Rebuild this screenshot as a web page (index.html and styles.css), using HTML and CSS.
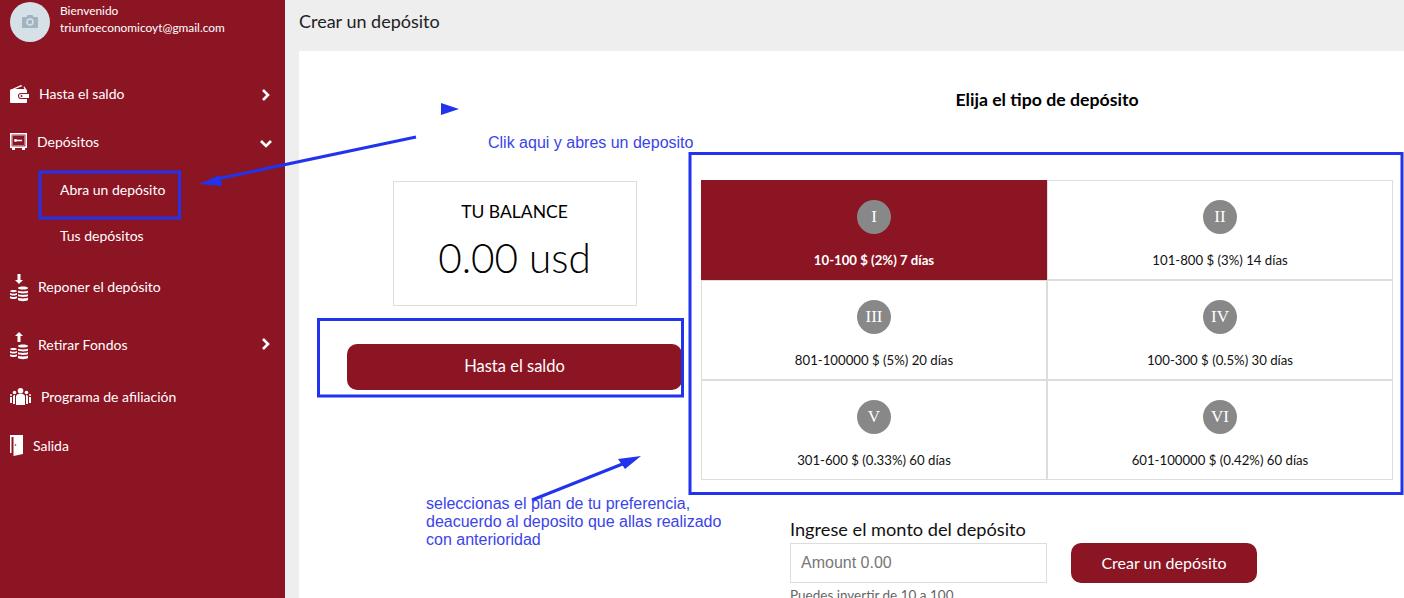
FILE: index.html
```html
<!DOCTYPE html>
<html lang="es">
<head>
<meta charset="utf-8">
<title>Crear un depósito</title>
<link rel="stylesheet" href="styles.css">
</head>
<body>
<div class="app">
  <aside class="sidebar">
    <div class="profile">
      <div class="avatar">
        <svg width="16" height="13" viewBox="0 0 16 13"><path fill="#a3b4c1" d="M1 2h3.500l1-2h5l1 2H15a1 1 0 0 1 1 1v9a1 1 0 0 1-1 1H1a1 1 0 0 1-1-1V3a1 1 0 0 1 1-1z"/><circle cx="8" cy="7" r="3.800" fill="#d6e0e7"/><circle cx="8" cy="7" r="2.200" fill="#a3b4c1"/></svg>
      </div>
      <div class="profile-text">
        <div>Bienvenido</div>
        <div class="email">triunfoeconomicoyt@gmail.com</div>
      </div>
    </div>
    <nav class="menu">
      <a class="item item-balance">
        <svg class="icon icon-wallet" width="19" height="18" viewBox="0 0 19 18"><path fill="#fff" d="M0 5 11 0l1.500 1L5 4h9.500l-1-2 1-.5L16 4v1z"/><path fill="#fff" d="M1 4.500h15a1 1 0 0 1 1 1V8h-6a3 3 0 0 0 0 6h6v3a1 1 0 0 1-1 1H1a1 1 0 0 1-1-1V5.500a1 1 0 0 1 1-1z"/><path fill="#fff" d="M11 9h8v4h-8a2 2 0 0 1 0-4z"/><circle cx="11.500" cy="11" r="1" fill="#8c1524"/></svg>
        <span class="label-balance">Hasta el saldo</span>
        <svg class="chev chev-balance" width="10" height="14" viewBox="0 0 10 14"><path d="M2 2l5 5-5 5" fill="none" stroke="#fff" stroke-width="2.600"/></svg>
      </a>
      <a class="item item-deposits">
        <svg class="icon" width="17" height="17" viewBox="0 0 17 17"><rect x=".8" y=".8" width="15.400" height="13.400" fill="none" stroke="#fff" stroke-width="1.600"/><rect x="2.500" y="2.500" width="12" height="10" fill="none" stroke="#d9a9af" stroke-width=".6"/><path fill="#fff" d="M2 15h3v2H2zM12 15h3v2h-3zM6 6.800h6v1.400H6z"/><circle cx="5.500" cy="7.500" r="1.400" fill="#fff"/></svg>
        <span class="label-deposits">Depósitos</span>
        <svg class="chev chev-down" width="14" height="10" viewBox="0 0 14 10"><path d="M2 2l5 5 5-5" fill="none" stroke="#fff" stroke-width="2.600"/></svg>
      </a>
      <a class="sub sub-open">Abra un depósito</a>
      <a class="sub sub-list">Tus depósitos</a>
      <a class="item item-refill">
        <svg class="icon icon-coins" width="18" height="28" viewBox="0 0 18 28"><path fill="#fff" d="M7.500 0h3v6H13l-4 4-4-4h2.500z"/><path fill="#fff" d="M8 14c0-2 10-2 10 0s-10 2-10 0zM8 16.500c1 1.200 9 1.200 10 0v2c-1 1.200-9 1.200-10 0zM8 20c1 1.200 9 1.200 10 0v2c-1 1.200-9 1.200-10 0zM8 23.500c1 1.200 9 1.200 10 0v2.500c-1 1.500-9 1.500-10 0zM0 17c0-1.500 7-1.500 7 0s-7 1.500-7 0zM0 19c1 1 6 1 7 0v1.800c-1 1-6 1-7 0zM0 22.300c1 1 6 1 7 0V24c-1 1.300-6 1.300-7 0z"/></svg>
        <span class="label-refill">Reponer el depósito</span>
      </a>
      <a class="item item-withdraw">
        <svg class="icon icon-coins" width="18" height="28" viewBox="0 0 18 28"><path fill="#fff" d="M7.500 10h3V4H13L9 0 5 4h2.500z"/><path fill="#fff" d="M8 14c0-2 10-2 10 0s-10 2-10 0zM8 16.500c1 1.200 9 1.200 10 0v2c-1 1.200-9 1.200-10 0zM8 20c1 1.200 9 1.200 10 0v2c-1 1.200-9 1.200-10 0zM8 23.500c1 1.200 9 1.200 10 0v2.500c-1 1.500-9 1.500-10 0zM0 17c0-1.500 7-1.500 7 0s-7 1.500-7 0zM0 19c1 1 6 1 7 0v1.800c-1 1-6 1-7 0zM0 22.300c1 1 6 1 7 0V24c-1 1.300-6 1.300-7 0z"/></svg>
        <span class="label-withdraw">Retirar Fondos</span>
        <svg class="chev chev-withdraw" width="10" height="14" viewBox="0 0 10 14"><path d="M2 2l5 5-5 5" fill="none" stroke="#fff" stroke-width="2.600"/></svg>
      </a>
      <a class="item item-affiliate">
        <svg class="icon" width="21" height="17" viewBox="0 0 21 17"><circle cx="10.500" cy="2.800" r="2.800" fill="#fff"/><path fill="#fff" d="M6 17V9a3 3 0 0 1 3-3h3a3 3 0 0 1 3 3v8z"/><circle cx="4.500" cy="4.500" r="1.800" fill="#fff"/><circle cx="16.500" cy="4.500" r="1.800" fill="#fff"/><path fill="#fff" d="M3 16V8.500A1.500 1.500 0 0 1 4.500 7H5v9zM16 16V7h.5A1.500 1.500 0 0 1 18 8.500V16z"/><circle cx="1" cy="7" r="1" fill="#fff"/><circle cx="20" cy="7" r="1" fill="#fff"/><path fill="#fff" d="M0 15V9h2v6zM19 15V9h2v6z"/></svg>
        <span class="label-affiliate">Programa de afiliación</span>
      </a>
      <a class="item item-exit">
        <svg class="icon" width="13" height="21" viewBox="0 0 13 21"><path fill="#fff" d="M0 0h13v2H1.500v16H0z"/><path fill="#fff" d="M3.500 1.500 13 0v19L3.500 21z"/><circle cx="5.500" cy="10" r=".8" fill="#8c1524"/></svg>
        <span class="label-exit">Salida</span>
      </a>
    </nav>
  </aside>
  <main class="main">
    <header class="topbar">Crear un depósito</header>
    <div class="content">
      <section class="left">
        <div class="balance">
          <div class="balance-label">TU BALANCE</div>
          <div class="balance-value">0.00 usd</div>
        </div>
        <a class="btn btn-wide">Hasta el saldo</a>
      </section>
      <section class="right">
        <h2 class="plans-title">Elija el tipo de depósito</h2>
        <div class="plans">
          <div class="plan plan-active"><span class="num">I</span><span class="plan-text">10-100 $ (2%) 7 días</span></div>
          <div class="plan"><span class="num">II</span><span class="plan-text">101-800 $ (3%) 14 días</span></div>
          <div class="plan"><span class="num">III</span><span class="plan-text">801-100000 $ (5%) 20 días</span></div>
          <div class="plan"><span class="num">IV</span><span class="plan-text">100-300 $ (0.5%) 30 días</span></div>
          <div class="plan"><span class="num">V</span><span class="plan-text">301-600 $ (0.33%) 60 días</span></div>
          <div class="plan"><span class="num">VI</span><span class="plan-text">601-100000 $ (0.42%) 60 días</span></div>
        </div>
        <div class="form">
          <label class="form-label" for="amount">Ingrese el monto del depósito</label>
          <div class="form-row">
            <input class="amount" id="amount" placeholder="Amount 0.00">
            <a class="btn btn-create">Crear un depósito</a>
          </div>
          <p class="hint">Puedes invertir de 10 a 100</p>
        </div>
      </section>
    </div>
  </main>
</div>
<svg class="marks" width="1404" height="598" viewBox="0 0 1404 598">
  <g fill="none" stroke="#2233ee" stroke-width="3">
    <rect x="40" y="172" width="139.500" height="46"/>
    <rect x="318.500" y="319.500" width="364" height="76.500"/>
    <rect x="690" y="153.500" width="712" height="340"/>
    <path d="M416 137 212 180M532 500 625 463"/>
  </g>
  <g fill="#2233ee">
    <path d="M441 103l18 6-18 6zM199 184l21-9 2 11zM641 456l-23 3 7 10z"/>
  </g>
</svg>
<div class="note note-click">Clik aqui y abres un deposito</div>
<div class="note note-plan">seleccionas el plan de tu preferencia,<br>deacuerdo al deposito que allas realizado<br>con anterioridad</div>
</body>
</html>
```
FILE: styles.css
```css
* { box-sizing: border-box; }
html, body { margin: 0; height: 100%; overflow: hidden; }
body { font-family: "Lato", "Open Sans", sans-serif; color: #111; background: #eeeeee; position: relative; }
.app { display: flex; height: 598px; }

.sidebar { width: 285px; flex: none; background: #8c1524; color: #fff; font-size: 14px; }
.profile { display: flex; align-items: center; gap: 10px; padding: 1px 0 0 10px; height: 42px; }
.avatar { width: 40px; height: 40px; border-radius: 50%; background: #d6e0e7; display: flex; align-items: center; justify-content: center; }
.profile-text { font-size: 11.900px; line-height: 17px; margin-top: -5px; }
.menu { display: flex; flex-direction: column; }
.item { display: flex; align-items: center; position: relative; padding-left: 10px; height: 30px; }
.icon { flex: none; }
.icon-coins { margin-top: 4px; }
.icon-wallet { margin-top: 2px; }
.chev { position: absolute; left: 261px; }
.chev-balance { top: 10px; }
.chev-down { left: 259px; top: 13px; }
.chev-withdraw { top: 8px; }
.label-balance { margin-left: 10px; }
.label-deposits { margin-left: 10px; }
.label-refill { margin-left: 10px; }
.label-withdraw { margin-left: 10px; }
.label-affiliate { margin-left: 10px; }
.label-exit { margin-left: 10px; }
.item-balance { margin-top: 36px; }
.item-deposits { margin-top: 18px; }
.sub { display: block; padding-left: 60px; height: 20px; line-height: 20px; }
.sub-open { margin-top: 24px; }
.sub-list { margin-top: 26px; }
.item-refill { margin-top: 25px; }
.item-withdraw { margin-top: 28px; }
.item-affiliate { margin-top: 22px; }
.item-exit { margin-top: 19px; }

.main { flex: 1; min-width: 0; display: flex; flex-direction: column; }
.topbar { flex: none; height: 51px; padding: 11px 0 0 14px; font-size: 18px; line-height: 21px; color: #222; }
.content { margin-left: 14px; flex: 1; background: #fff; display: flex; }
.left { width: 402px; flex: none; padding: 130px 19px 0 48px; display: flex; flex-direction: column; align-items: center; }
.balance { width: 244px; height: 125px; border: 1px solid #dddddd; text-align: center; padding-top: 19px; color: #000; }
.balance-label { font-size: 17.500px; line-height: 22px; }
.balance-value { font-size: 40.500px; font-weight: 300; line-height: 46px; margin-top: 12px; }
.btn { display: flex; align-items: center; justify-content: center; background: #8c1524; color: #fff; border-radius: 10px; font-size: 16px; padding-bottom: 2px; }
.btn-wide { width: 335px; height: 46px; margin-top: 38px; font-size: 16.500px; }

.right { width: 692px; flex: none; }
.plans-title { margin: 38px 0 0; height: 91px; font-size: 17.700px; line-height: 21px; font-weight: 700; color: #000; text-align: center; }
.plans { display: grid; grid-template-columns: 1fr 1fr; grid-auto-rows: 100px; }
.plan { border: 1px solid #dddddd; display: flex; flex-direction: column; align-items: center; padding-top: 19px; font-size: 13.200px; color: #111; background: #fff; }
.plan-active { background: #8c1524; border-color: #8c1524; color: #fff; font-weight: 700; }
.num { width: 34px; height: 34px; border-radius: 50%; background: #888888; color: #fff; font-family: "Liberation Serif", serif; font-size: 17px; font-weight: 400; display: flex; align-items: center; justify-content: center; }
.plan-text { margin-top: 17px; line-height: 18px; }
.form { margin: 39px 0 0 89px; }
.form-label { display: block; font-size: 18.200px; line-height: 20px; color: #111; }
.form-row { display: flex; gap: 24px; margin-top: 4px; }
.amount { width: 257px; height: 40px; border: 1px solid #dddddd; padding: 0 10px; font-family: "Liberation Sans", sans-serif; font-size: 16px; background: #fff; outline: none; }
.amount::placeholder { color: #777; }
.btn-create { width: 186px; height: 40px; }
.hint { margin: 4px 0 0; font-size: 13.500px; line-height: 16px; color: #666; }

.marks { position: absolute; left: 0; top: 0; pointer-events: none; }
.note { position: absolute; font-family: "Liberation Sans", sans-serif; font-size: 16px; line-height: 18px; color: #3a44e8; white-space: nowrap; }
.note-click { left: 488px; top: 134px; }
.note-plan { left: 426px; top: 495px; }
```
